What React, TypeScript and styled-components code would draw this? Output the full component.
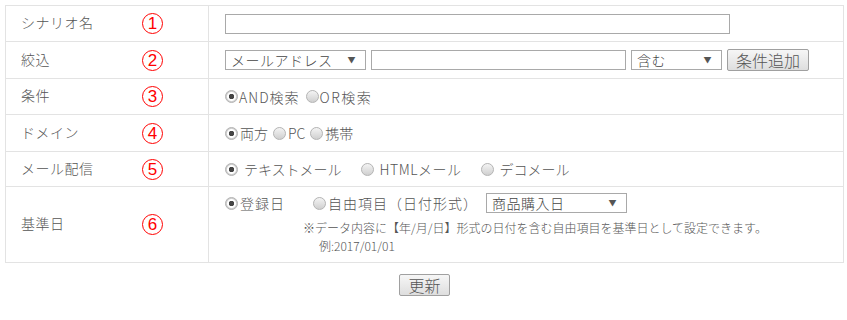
import React from 'react';
import styled, { createGlobalStyle } from 'styled-components';

const GlobalStyle = createGlobalStyle`
  html, body {
    margin: 0;
    padding: 0;
    background: #fff;
  }
  body {
    font-family: 'Noto Sans CJK JP', 'Noto Sans', sans-serif;
    font-size: 14px;
    font-weight: 300;
    color: #555;
  }
`;

const Page = styled.div`
  padding: 5px 3px 0 5px;
`;

const Table = styled.table`
  width: 839px;
  border-collapse: collapse;
  table-layout: fixed;
`;

const Row = styled.tr<{ $height: number }>`
  height: ${p => p.$height}px;
`;

const LabelCell = styled.td`
  width: 203px;
  box-sizing: border-box;
  border: 1px solid #e3e3e3;
  padding: 0 0 0 15px;
  vertical-align: middle;
`;

const LabelInner = styled.div`
  display: flex;
  align-items: center;
`;

const LabelText = styled.span`
  width: 121px;
  line-height: 1;
  font-size: 14px;
  letter-spacing: 0.5px;
  color: #555;
  margin-bottom: 3px;
`;

const Badge = styled.span`
  width: 21px;
  height: 21px;
  box-sizing: border-box;
  border: 1.5px solid #f00;
  border-radius: 50%;
  color: #f00;
  font-family: 'Liberation Sans', Arial, sans-serif;
  font-weight: 400;
  font-size: 17px;
  line-height: 19px;
  text-align: center;
`;

const ContentCell = styled.td<{ $top?: boolean }>`
  border: 1px solid #e3e3e3;
  padding: ${p => (p.$top ? '6px 16px 0 16px' : '0 16px')};
  vertical-align: ${p => (p.$top ? 'top' : 'middle')};
`;

const Line = styled.div<{ $gap?: number }>`
  display: flex;
  align-items: center;
  gap: ${p => p.$gap ?? 0}px;
`;

const TextInput = styled.div<{ $width: number }>`
  width: ${p => p.$width}px;
  height: 20px;
  box-sizing: border-box;
  border: 1px solid #a9a9a9;
  background: #fff;
`;

const Select = styled.div<{ $width: number }>`
  width: ${p => p.$width}px;
  height: 20px;
  box-sizing: border-box;
  border: 1px solid #a9a9a9;
  background: #fff;
  display: flex;
  align-items: center;
  justify-content: space-between;
  padding: 0 9px 0 5px;
  font-size: 14px;
  letter-spacing: 0.5px;
  color: #444;
  line-height: 1;
`;

const Arrow = styled.span`
  font-size: 8px;
  color: #555;
`;

const Button = styled.button`
  height: 22px;
  box-sizing: border-box;
  border: 1px solid #a0a0a0;
  border-radius: 2px;
  background: linear-gradient(#f6f6f6, #dedede);
  font-family: 'Noto Sans CJK JP', sans-serif;
  font-weight: 300;
  font-size: 16px;
  color: #555;
  padding: 0 8px;
  line-height: 1;
`;

const RadioItem = styled.span<{ $gap?: number }>`
  display: inline-flex;
  align-items: center;
  gap: ${p => p.$gap ?? 2}px;
  line-height: 1;
`;

const RadioMark = styled.span<{ $checked?: boolean }>`
  width: 13px;
  height: 13px;
  box-sizing: border-box;
  border-radius: 50%;
  border: 1px solid #b5b5b5;
  background: ${p =>
    p.$checked
      ? 'radial-gradient(circle, #444 0 2.5px, #fff 3px 4px, #d0d0d0 5px)'
      : 'linear-gradient(#f4f4f4, #cfcfcf)'};
  flex-shrink: 0;
`;

const RadioLabel = styled.span<{ $spacing?: number }>`
  letter-spacing: ${p => p.$spacing ?? 0}px;
`;

const Spacer = styled.span<{ $w: number }>`
  width: ${p => p.$w}px;
  flex-shrink: 0;
`;

const Note = styled.div<{ $indent: number }>`
  font-size: 12px;
  line-height: 18px;
  color: #555;
  padding-left: ${p => p.$indent}px;
`;

const Footer = styled.div`
  display: flex;
  justify-content: center;
  padding: 11px 0 0 0;
`;

const Radio: React.FC<{ checked?: boolean; label: string; gap?: number; spacing?: number }> = ({
  checked,
  label,
  gap,
  spacing,
}) => (
  <RadioItem $gap={gap}>
    <RadioMark $checked={checked} />
    <RadioLabel $spacing={spacing}>{label}</RadioLabel>
  </RadioItem>
);

const Label: React.FC<{ text: string; num: number }> = ({ text, num }) => (
  <LabelCell>
    <LabelInner>
      <LabelText>{text}</LabelText>
      <Badge>{num}</Badge>
    </LabelInner>
  </LabelCell>
);

const App: React.FC = () => {
  return (
    <>
      <GlobalStyle />
      <Page>
        <Table>
          <tbody>
            <Row $height={36}>
              <Label text="シナリオ名" num={1} />
              <ContentCell>
                <TextInput $width={505} />
              </ContentCell>
            </Row>
            <Row $height={37}>
              <Label text="絞込" num={2} />
              <ContentCell>
                <Line $gap={5}>
                  <Select $width={141}>
                    メールアドレス<Arrow>▼</Arrow>
                  </Select>
                  <TextInput $width={255} />
                  <Select $width={91}>
                    含む<Arrow>▼</Arrow>
                  </Select>
                  <Button>条件追加</Button>
                </Line>
              </ContentCell>
            </Row>
            <Row $height={36}>
              <Label text="条件" num={3} />
              <ContentCell>
                <Line $gap={6}>
                  <Radio checked label="AND検索" gap={1} spacing={1} />
                  <Radio label="OR検索" gap={1} spacing={1.5} />
                </Line>
              </ContentCell>
            </Row>
            <Row $height={37}>
              <Label text="ドメイン" num={4} />
              <ContentCell>
                <Line $gap={5}>
                  <Radio checked label="両方" />
                  <Radio label="PC" />
                  <Radio label="携帯" />
                </Line>
              </ContentCell>
            </Row>
            <Row $height={35}>
              <Label text="メール配信" num={5} />
              <ContentCell>
                <Line $gap={19}>
                  <Radio checked label="テキストメール" gap={6} />
                  <Radio label="HTMLメール" gap={6} spacing={0.5} />
                  <Radio label="デコメール" gap={6} />
                </Line>
              </ContentCell>
            </Row>
            <Row $height={76}>
              <Label text="基準日" num={6} />
              <ContentCell $top>
                <Line>
                  <Radio checked label="登録日" spacing={1} />
                  <Spacer $w={28} />
                  <Radio label="自由項目（日付形式）" spacing={1} />
                  <Spacer $w={8} />
                  <Select $width={141}>
                    商品購入日<Arrow>▼</Arrow>
                  </Select>
                </Line>
                <Note $indent={78} style={{ marginTop: 6 }}>
                  ※データ内容に【年/月/日】形式の日付を含む自由項目を基準日として設定できます。
                </Note>
                <Note $indent={94}>例:2017/01/01</Note>
              </ContentCell>
            </Row>
          </tbody>
        </Table>
        <Footer>
          <Button>更新</Button>
        </Footer>
      </Page>
    </>
  );
};

export default App;
